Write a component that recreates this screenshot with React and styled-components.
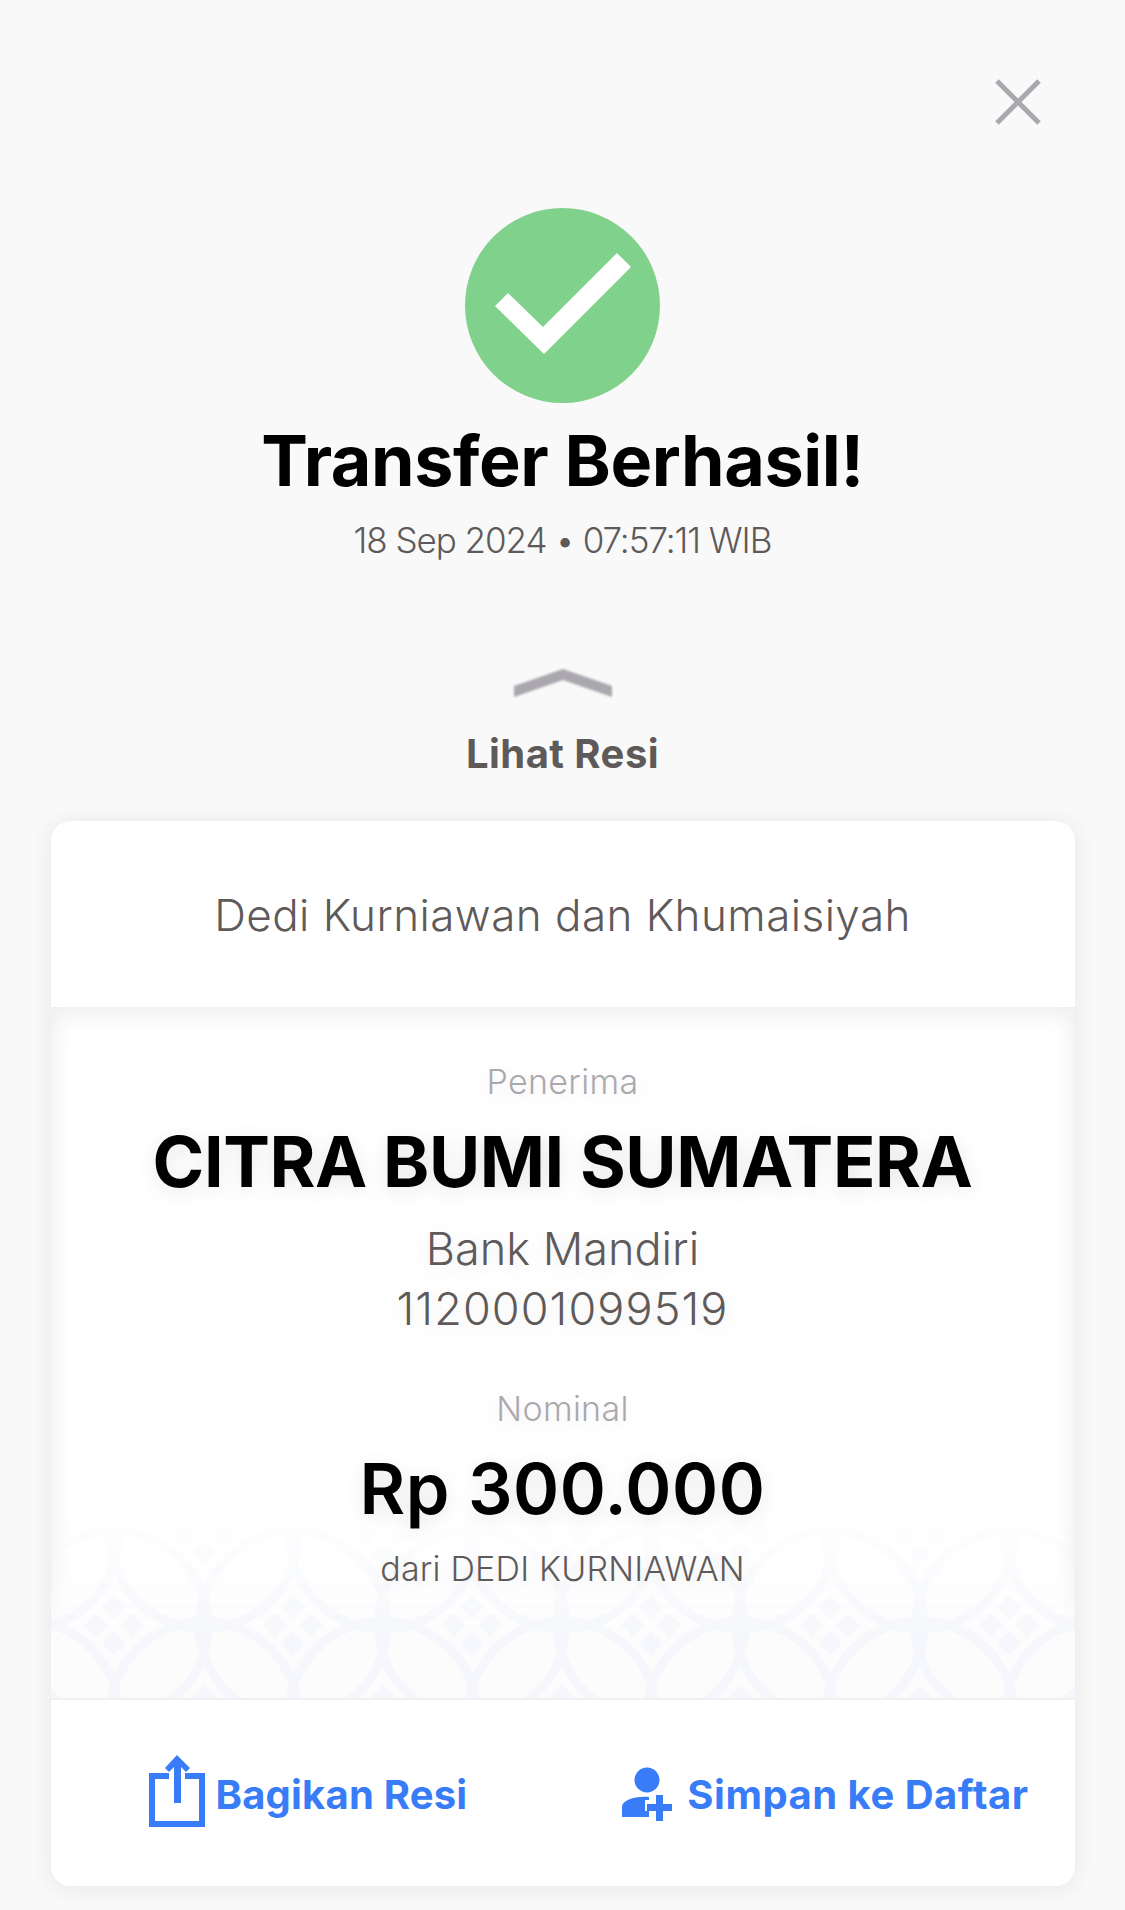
import React from "react"
import styled, { createGlobalStyle } from "styled-components"

const COLS = [-1, 0, 1, 2, 3, 4, 5, 6, 7, 8, 9, 10, 11, 12]
const ROWS = [-1, 0, 1, 2]

// lattice of the batik pattern, offset every other row
const motifs = ROWS.flatMap(row =>
  COLS.map(col => ({
    x: 63 + col * 179 + (row % 2 ? 90 : 0),
    y: 118 + row * 90
  }))
)

const App = () => (
  <Page>
    <GlobalStyle />
    <TopBar>
      <CloseIcon viewBox="0 0 46 46">
        <path d="M2 2L44 44M44 2L2 44" />
      </CloseIcon>
    </TopBar>
    <SuccessBadge>
      <svg viewBox="0 0 195 195" width="195" height="195">
        <polygon points="30,98 43,85 78,119 152,45 166,59 79,146" fill="#fff" />
      </svg>
    </SuccessBadge>
    <Title>Transfer Berhasil!</Title>
    <DateText>18 Sep 2024 • 07:57:11 WIB</DateText>
    <Chevron viewBox="0 0 98 28">
      <polygon points="0,17 49,0 98,17 98,28 49,11 0,28" />
    </Chevron>
    <ToggleLabel>Lihat Resi</ToggleLabel>
    <Card>
      <CardHeader>Dedi Kurniawan dan Khumaisiyah</CardHeader>
      <CardBody>
        <Batik viewBox="0 0 1024 191">
          {motifs.map(({ x, y }, i) => (
            <g key={i}>
              <circle cx={x} cy={y} r="94" fill="none" stroke="#f5f7fc" strokeWidth="9" />
              <path
                d={`M${x} ${y - 30}l12 12l-12 12l-12 -12zM${x} ${y + 6}l12 12l-12 12l-12 -12zM${x - 18} ${y - 12}l12 12l-12 12l-12 -12zM${x + 18} ${y - 12}l12 12l-12 12l-12 -12z`}
                fill="#f5f7fc"
              />
            </g>
          ))}
        </Batik>
        <Caption>Penerima</Caption>
        <Name>CITRA BUMI SUMATERA</Name>
        <Detail first>Bank Mandiri</Detail>
        <Detail wide>1120001099519</Detail>
        <Caption gap>Nominal</Caption>
        <Amount>Rp 300.000</Amount>
        <Source>dari DEDI KURNIAWAN</Source>
      </CardBody>
      <CardFooter>
        <Action>
          <ShareIcon viewBox="0 0 56 72">
            <path d="M20 21H3V69H53V21H36" fill="none" stroke="#387cf8" strokeWidth="6" />
            <path d="M28 0L41 13L37 17L32 12V48H25V12L20 17L16 13Z" fill="#387cf8" />
          </ShareIcon>
          <ActionLabel>Bagikan Resi</ActionLabel>
        </Action>
        <Action wide>
          <PersonIcon viewBox="0 0 52 54">
            <circle cx="26" cy="13" r="12.5" fill="#387cf8" />
            <path d="M1 50V40C1 34 12 29 28 30V33H24V44H28V50Z" fill="#387cf8" />
            <path d="M35 28H42V37H51V44H42V54H35V44H26V37H35Z" fill="#387cf8" />
          </PersonIcon>
          <ActionLabel wide>Simpan ke Daftar</ActionLabel>
        </Action>
      </CardFooter>
    </Card>
  </Page>
)

const GlobalStyle = createGlobalStyle`
  html, body {
    margin: 0;
    background: #f9f9f9;
  }
`

const Page = styled.div`
  display: flex;
  flex-direction: column;
  align-items: center;
  width: 1125px;
  height: 1910px;
  overflow: hidden;
  background: #f9f9f9;
  font-family: Inter, "Liberation Sans", sans-serif;
  color: #5f5a5a;
`

const TopBar = styled.div`
  display: flex;
  justify-content: flex-end;
  width: 100%;
  box-sizing: border-box;
  padding: 79px 84px 0 0;
`

const CloseIcon = styled.svg`
  width: 46px;
  height: 46px;
  fill: none;
  stroke: #aaa7ae;
  stroke-width: 5;
`

const SuccessBadge = styled.div`
  width: 195px;
  height: 195px;
  margin-top: 83px;
  border-radius: 50%;
  background: #80d18c;
`

const Title = styled.h1`
  margin: 18px 0 0;
  font-size: 70px;
  line-height: 80px;
  font-weight: 700;
  letter-spacing: -0.4px;
  color: #000;
`

const DateText = styled.div`
  margin-top: 19px;
  font-size: 35px;
  line-height: 40px;
  font-weight: 300;
  letter-spacing: -1.05px;
`

const Chevron = styled.svg`
  width: 98px;
  height: 28px;
  margin-top: 109px;
  fill: #aaa7ae;
  filter: blur(1px);
`

const ToggleLabel = styled.div`
  margin-top: 32px;
  font-size: 40px;
  line-height: 50px;
  font-weight: 700;
  letter-spacing: 0.45px;
`

const Card = styled.div`
  display: flex;
  flex-direction: column;
  width: 1024px;
  height: 1065px;
  margin-top: 42px;
  border-radius: 20px;
  overflow: hidden;
  background: #fff;
  box-shadow: 0 2px 22px rgba(60, 50, 60, 0.09);
`

const CardHeader = styled.div`
  flex: 0 0 186px;
  box-sizing: border-box;
  padding-top: 2px;
  display: flex;
  align-items: center;
  justify-content: center;
  font-size: 44px;
  font-weight: 300;
  letter-spacing: 0.45px;
`

const CardBody = styled.div`
  position: relative;
  flex: 0 0 691px;
  display: flex;
  flex-direction: column;
  align-items: center;
  box-sizing: border-box;
  padding-top: 55px;
  background: #fff;
  box-shadow: inset 0 8px 26px rgba(60, 50, 60, 0.06), inset 0 0 22px rgba(60, 50, 60, 0.04);
  text-shadow: 0 4px 20px rgba(0, 0, 0, 0.1);
`

const Batik = styled.svg`
  position: absolute;
  left: 0;
  bottom: 0;
  width: 1024px;
  height: 191px;
  background: linear-gradient(to bottom, transparent 0, #fcfcfd 70%);
  mask-image: linear-gradient(to bottom, transparent 0, #000 70%);
`

const Caption = styled.div`
  position: relative;
  margin-top: ${props => (props.gap ? "50px" : "0")};
  font-size: 34px;
  line-height: 40px;
  font-weight: 300;
  letter-spacing: 0.3px;
  color: #aba8ae;
`

const Name = styled.div`
  position: relative;
  margin-top: 20px;
  font-size: 70px;
  line-height: 80px;
  font-weight: 700;
  letter-spacing: -0.42px;
  color: #000;
`

const Detail = styled.div`
  position: relative;
  margin-top: ${props => (props.first ? "17px" : "0")};
  font-size: 45px;
  line-height: 60px;
  font-weight: 300;
  letter-spacing: ${props => (props.wide ? "1.1px" : "0")};
`

const Amount = styled.div`
  position: relative;
  margin-top: 20px;
  font-size: 70px;
  line-height: 80px;
  font-weight: 600;
  letter-spacing: 0.5px;
  color: #000;
`

const Source = styled.div`
  position: relative;
  margin-top: 20px;
  font-size: 34px;
  line-height: 40px;
  font-weight: 300;
  letter-spacing: 0.2px;
`

const CardFooter = styled.div`
  flex: 1;
  display: flex;
  align-items: center;
  justify-content: space-between;
  padding: 0 46px 0 98px;
  border-top: 2px solid #f0eff2;
  background: #fff;
`

const Action = styled.div`
  display: flex;
  align-items: center;
  gap: ${props => (props.wide ? "14px" : "11px")};
  color: #387cf8;
`

const ActionLabel = styled.span`
  padding-top: 4px;
  font-size: 40px;
  line-height: 50px;
  font-weight: 700;
  letter-spacing: ${props => (props.wide ? "0.5px" : "0.2px")};
`

const ShareIcon = styled.svg`
  width: 56px;
  height: 72px;
  margin-bottom: 4px;
`

const PersonIcon = styled.svg`
  width: 52px;
  height: 54px;
  margin-top: 2px;
`

export default App
